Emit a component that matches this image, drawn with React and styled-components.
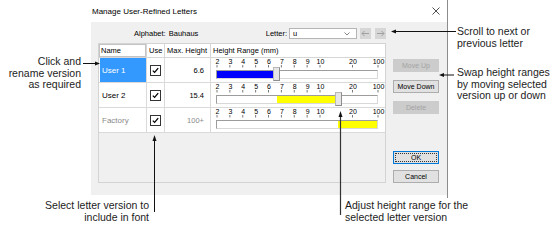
import React from "react";
import styled, { createGlobalStyle } from "styled-components";

const GlobalStyle = createGlobalStyle`
  html, body {
    margin: 0;
    padding: 0;
    background: #fff;
  }
  body {
    font-family: "Liberation Sans", Arial, sans-serif;
  }
`;

// value (mm) -> x inside the height range cell
const pos = (v) => {
  if (v <= 10) return 6.5 + (v - 2) * 12.875;
  if (v <= 20) return 109.5 + (v - 10) * 3.25;
  return 142 + (v - 20) * (25.5 / 80);
};

const TICKS = [2, 3, 4, 5, 6, 7, 8, 9, 10, 20, 100];
const TRACK_END = 167;

const versions = [
  { name: "User 1", max: "6.6", from: 2, to: 6.6, fill: "#0000ff", selected: true, thumb: true },
  { name: "User 2", max: "15.4", from: 6.6, to: 15.4, fill: "#ffff00", thumb: true },
  { name: "Factory", max: "100+", from: 15.4, to: 100, fill: "#ffff00", factory: true },
];

const Stage = styled.div`
  position: relative;
  width: 560px;
  height: 240px;
  overflow: hidden;
  display: grid;
  grid-template-columns: 91px 357px 1fr;
  grid-template-rows: 198px 1fr;
`;

const Note = styled.div`
  font-size: 10.5px;
  line-height: 11.5px;
  color: #1c1c1c;
  text-align: ${(p) => (p.$right ? "right" : "left")};
`;

const LeftNotes = styled.div`
  padding: 56px 10px 0 0;
`;

const RightNotes = styled.div`
  display: flex;
  flex-direction: column;
  gap: 18px;
  padding: 26px 0 0 9px;
`;

const BottomNotes = styled.div`
  grid-column: 1 / -1;
  display: flex;
  padding-top: 2px;
`;

const SelectNote = styled(Note)`
  width: 149px;
`;

const AdjustNote = styled(Note)`
  margin-left: 196px;
`;

const Dialog = styled.div`
  display: flex;
  flex-direction: column;
  border-right: 1px solid #8c8c8c;
  font-size: 7.5px;
  color: #000;
`;

const TitleBar = styled.div`
  height: 22px;
  display: flex;
  align-items: center;
  justify-content: space-between;
  padding: 0 7px 0 1px;
  font-size: 8px;
  background: #fff;
`;

const Body = styled.div`
  height: 173px;
  box-sizing: border-box;
  background: #f0f0f0;
  padding: 5px 8px 12px 7px;
  display: flex;
  flex-direction: column;
`;

const TopRow = styled.div`
  width: 288px;
  height: 13px;
  margin-bottom: 3px;
  display: flex;
  align-items: center;
`;

const Label = styled.span`
  margin-left: ${(p) => p.$indent || 0}px;
`;

const Group = styled.div`
  margin-left: auto;
  display: flex;
  align-items: center;
`;

const Select = styled.div`
  width: 68px;
  height: 11px;
  box-sizing: border-box;
  margin-left: 2px;
  background: #fff;
  border: 1px solid #b5b5b5;
  display: flex;
  align-items: center;
  justify-content: space-between;
  padding: 0 6px 0 3px;
`;

const NavButton = styled.div`
  width: 11px;
  height: 11px;
  margin-left: ${(p) => p.$gap}px;
  background: #d6d6d6;
  display: flex;
  align-items: center;
  justify-content: center;
`;

const Main = styled.div`
  height: 140px;
  display: flex;
  gap: 7px;
`;

const Panel = styled.div`
  width: 288px;
  box-sizing: border-box;
  border: 1px solid #d3d3d3;
  background: #f0f0f0;
`;

const Table = styled.div`
  display: grid;
  grid-template-columns: 48px 18px 46px 1fr;
`;

const HeadCell = styled.div`
  height: 13px;
  border-bottom: 1px solid #d6d6d6;
  border-right: ${(p) => (p.$last ? "none" : "1px solid #d6d6d6")};
  background: #fff;
  display: flex;
  align-items: center;
  padding-left: 2px;
  white-space: nowrap;
  overflow: hidden;
  box-shadow: ${(p) => (p.$boxed ? "inset 0 0 0 1px #c4c4c4" : "none")};
`;

const Cell = styled.div`
  position: relative;
  height: 24px;
  border-bottom: 1px solid #dadada;
  border-right: ${(p) => (p.$last ? "none" : "1px solid #dadada")};
  background: #fff;
  display: flex;
  align-items: center;
  justify-content: ${(p) => p.$align || "flex-start"};
  padding: ${(p) => p.$pad || "0"};
  color: ${(p) => (p.$muted ? "#8a8a8a" : "#000")};
`;

const NameBox = styled.div`
  align-self: stretch;
  flex: 1;
  margin-left: 1px;
  display: flex;
  align-items: center;
  padding-left: 2px;
  font-size: 8px;
  background: ${(p) => (p.$selected ? "#3399ff" : "transparent")};
  color: ${(p) => (p.$selected ? "#fff" : p.$muted ? "#8a8a8a" : "#000")};
`;

const CheckBox = styled.div`
  width: 11px;
  height: 11px;
  box-sizing: border-box;
  border: 1px solid #333;
  background: #fff;
  display: flex;
  align-items: center;
  justify-content: center;
`;

const RangeCell = styled(Cell)`
  flex-direction: column;
  align-items: stretch;
  justify-content: flex-start;
`;

const Ruler = styled.svg`
  display: block;
`;

const Track = styled.div`
  width: ${TRACK_END - 5}px;
  height: 9px;
  box-sizing: border-box;
  margin: 1px 0 0 5px;
  background: #fff;
  border: 1px solid;
  border-color: #9c9c9c #d8d8d8 #d8d8d8 #9c9c9c;
`;

const Fill = styled.div`
  position: absolute;
  top: 13px;
  height: 7px;
  background: ${(p) => p.$color};
`;

const Thumb = styled.div`
  position: absolute;
  top: 9px;
  width: 7px;
  height: 14px;
  box-sizing: border-box;
  background: #e6e6e6;
  border: 1px solid;
  border-color: #b8b8b8 #8e8e8e #8e8e8e #b8b8b8;
`;

const ButtonCol = styled.div`
  width: 46px;
  display: flex;
  flex-direction: column;
`;

const ButtonGroup = styled.div`
  display: flex;
  flex-direction: column;
  gap: ${(p) => p.$gap}px;
  margin-top: ${(p) => (p.$bottom ? "auto" : "16px")};
`;

const Button = styled.div`
  position: relative;
  height: 13px;
  box-sizing: border-box;
  display: flex;
  align-items: center;
  justify-content: center;
  font-size: 7px;
  background: ${(p) => (p.$disabled ? "#cccccc" : "#e1e1e1")};
  color: ${(p) => (p.$disabled ? "#a3a3a3" : "#000")};
  border: 1px solid ${(p) => (p.$disabled ? "#cccccc" : p.$default ? "#0078d7" : "#adadad")};
  outline: ${(p) => (p.$default ? "1px dotted #333" : "none")};
  outline-offset: -3px;
`;

const Arrows = styled.svg`
  position: absolute;
  inset: 0;
  pointer-events: none;
`;

function Check() {
  return (
    <svg width="7" height="7" viewBox="0 0 7 7">
      <path d="M0.8 3.6 L2.6 5.4 L6.2 1.2" fill="none" stroke="#000" strokeWidth="1.3" />
    </svg>
  );
}

function Scale() {
  return (
    <Ruler width="174" height="11">
      {TICKS.map((t) => (
        <g key={t}>
          <text x={pos(t)} y="6.2" fontSize="7" textAnchor="middle" fill="#000" fontFamily="Liberation Sans, Arial, sans-serif">
            {t}
          </text>
          <line x1={pos(t) - 0.5} x2={pos(t) - 0.5} y1="7" y2="9.5" stroke="#555" strokeWidth="0.8" />
        </g>
      ))}
    </Ruler>
  );
}

function RangeSlider({ v }) {
  const start = v.from === 2 ? 6 : pos(v.from);
  const end = v.thumb ? pos(v.to) - 3.5 : TRACK_END - 1;
  return (
    <RangeCell $last>
      <Scale />
      <Track />
      <Fill $color={v.fill} style={{ left: start, width: end - start }} />
      {v.thumb && <Thumb style={{ left: pos(v.to) - 3.5 }} />}
    </RangeCell>
  );
}

function NavArrow({ dir }) {
  const d = dir === "left" ? "M1 3.5 H8 M1 3.5 L3.5 1 M1 3.5 L3.5 6" : "M8 3.5 H1 M8 3.5 L5.5 1 M8 3.5 L5.5 6";
  return (
    <svg width="9" height="7" viewBox="0 0 9 7">
      <path d={d} fill="none" stroke="#9a9a9a" strokeWidth="0.9" />
    </svg>
  );
}

function Head({ x, y, dir }) {
  const pts = {
    right: `${x},${y} ${x - 5},${y - 2} ${x - 5},${y + 2}`,
    left: `${x},${y} ${x + 5},${y - 2} ${x + 5},${y + 2}`,
    up: `${x},${y} ${x - 2},${y + 6} ${x + 2},${y + 6}`,
  };
  return <polygon points={pts[dir]} fill="#111" />;
}

export default function App() {
  return (
    <>
      <GlobalStyle />
      <Stage>
        <LeftNotes>
          <Note $right>
            Click and
            <br />
            rename version
            <br />
            as required
          </Note>
        </LeftNotes>

        <Dialog>
          <TitleBar>
            <span>Manage User-Refined Letters</span>
            <svg width="8" height="8" viewBox="0 0 8 8">
              <path d="M0.5 0.5 L7.5 7.5 M7.5 0.5 L0.5 7.5" stroke="#222" strokeWidth="0.8" />
            </svg>
          </TitleBar>
          <Body>
            <TopRow>
              <Label $indent={36}>Alphabet:</Label>
              <Label $indent={3}>Bauhaus</Label>
              <Group>
                <span>Letter:</span>
                <Select>
                  <span>u</span>
                  <svg width="6" height="4" viewBox="0 0 6 4">
                    <path d="M0.5 0.5 L3 3 L5.5 0.5" fill="none" stroke="#666" strokeWidth="0.8" />
                  </svg>
                </Select>
                <NavButton $gap={3}>
                  <NavArrow dir="left" />
                </NavButton>
                <NavButton $gap={4}>
                  <NavArrow dir="right" />
                </NavButton>
              </Group>
            </TopRow>

            <Main>
              <Panel>
                <Table>
                  <HeadCell $boxed>Name</HeadCell>
                  <HeadCell>Use</HeadCell>
                  <HeadCell>Max. Height</HeadCell>
                  <HeadCell $last>Height Range (mm)</HeadCell>
                  {versions.map((v) => (
                    <React.Fragment key={v.name}>
                      <Cell>
                        <NameBox $selected={v.selected} $muted={v.factory}>
                          {v.name}
                        </NameBox>
                      </Cell>
                      <Cell $align="center">
                        <CheckBox>
                          <Check />
                        </CheckBox>
                      </Cell>
                      <Cell $align="flex-end" $pad="0 6px 0 0" $muted={v.factory}>
                        {v.max}
                      </Cell>
                      <RangeSlider v={v} />
                    </React.Fragment>
                  ))}
                </Table>
              </Panel>

              <ButtonCol>
                <ButtonGroup $gap={8}>
                  <Button $disabled>Move Up</Button>
                  <Button>Move Down</Button>
                  <Button $disabled>Delete</Button>
                </ButtonGroup>
                <ButtonGroup $gap={6} $bottom>
                  <Button $default>OK</Button>
                  <Button>Cancel</Button>
                </ButtonGroup>
              </ButtonCol>
            </Main>
          </Body>
        </Dialog>

        <RightNotes>
          <Note>
            Scroll to next or
            <br />
            previous letter
          </Note>
          <Note>
            Swap height ranges
            <br />
            by moving selected
            <br />
            version up or down
          </Note>
        </RightNotes>

        <BottomNotes>
          <SelectNote $right>
            Select letter version to
            <br />
            include in font
          </SelectNote>
          <AdjustNote>
            Adjust height range for the
            <br />
            selected letter version
          </AdjustNote>
        </BottomNotes>

        <Arrows width="560" height="240">
          <line x1="83" y1="63.5" x2="95" y2="63.5" stroke="#111" strokeWidth="1" />
          <Head x={100} y={63.5} dir="right" />
          <line x1="396" y1="31.5" x2="456" y2="31.5" stroke="#111" strokeWidth="1" />
          <Head x={391} y={31.5} dir="left" />
          <line x1="443" y1="75" x2="454" y2="75" stroke="#111" strokeWidth="1" />
          <Head x={439} y={75} dir="left" />
          <line x1="154.5" y1="141" x2="154.5" y2="212" stroke="#111" strokeWidth="1" />
          <Head x={154.5} y={135} dir="up" />
          <line x1="340.5" y1="117" x2="340.5" y2="215" stroke="#333" strokeWidth="1.2" />
          <Head x={340.5} y={111} dir="up" />
        </Arrows>
      </Stage>
    </>
  );
}
